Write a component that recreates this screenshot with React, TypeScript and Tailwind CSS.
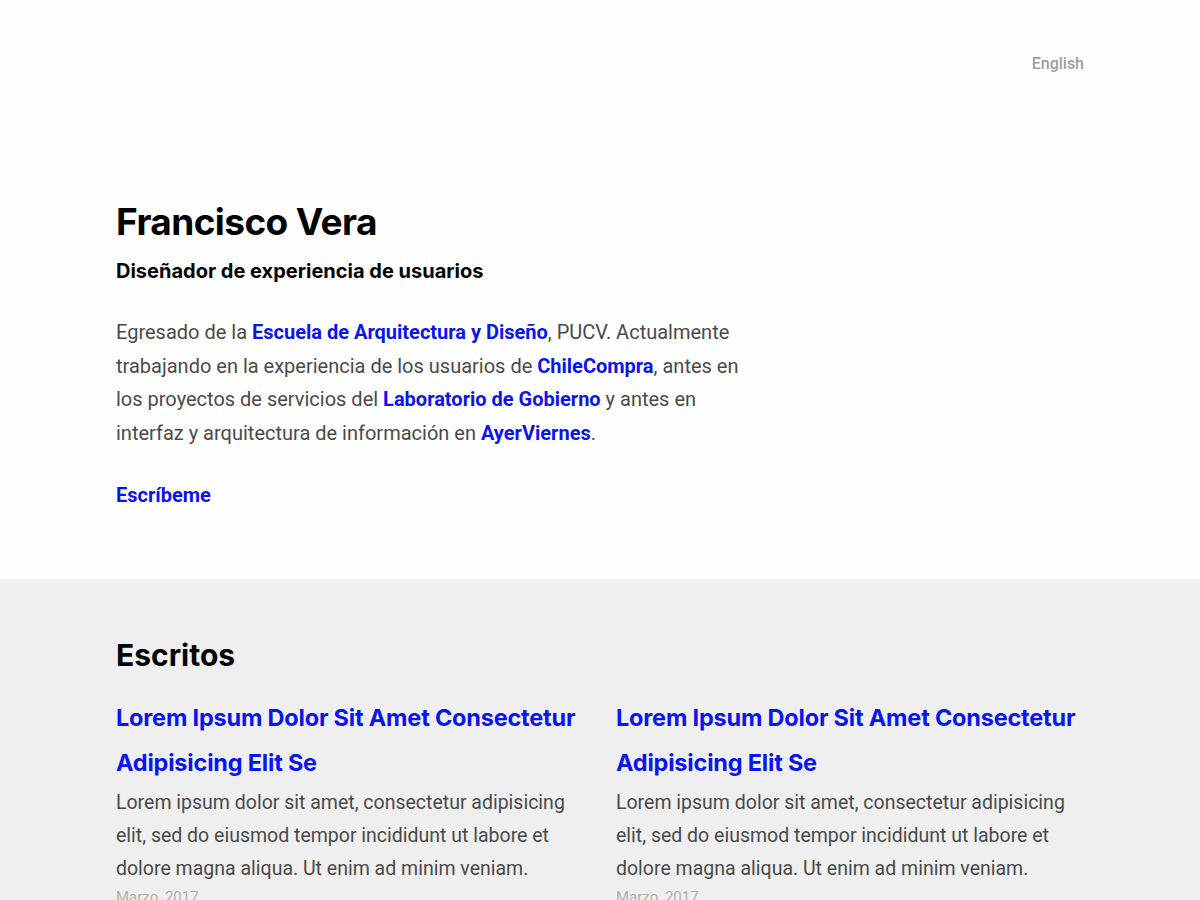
import React from "react";

function Article() {
  return (
    <div>
      <h3 className="font-[Inter,sans-serif] text-[23.5px] font-bold leading-[45px] text-[#0a14f0] tracking-[-0.2px]">
        Lorem Ipsum Dolor Sit Amet Consectetur Adipisicing Elit Se
      </h3>
      <p className="w-[468px] font-[Roboto,sans-serif] text-[19.5px] leading-[33px] text-[#4a4a4a] mt-[1px]">
        Lorem ipsum dolor sit amet, consectetur adipisicing elit, sed do eiusmod tempor incididunt ut labore et dolore magna aliqua. Ut enim ad minim veniam.
      </p>
      <p className="font-[Roboto,sans-serif] text-[15px] leading-[20px] text-[#b0b0b0] mt-[2px]">
        Marzo, 2017
      </p>
    </div>
  );
}

export default function App() {
  return (
    <div className="min-h-[900px] bg-[#fefefe] font-[Roboto,sans-serif]">
      <header className="w-[968px] mx-auto flex justify-end pt-[52px]">
        <a className="text-[16px] font-medium text-[#9e9e9e]">English</a>
      </header>
      <section className="w-[968px] mx-auto pt-[123px] pb-[71px]">
        <h1 className="font-[Inter,sans-serif] text-[37px] font-bold text-black leading-[46px] tracking-[-0.6px]">Francisco Vera</h1>
        <h2 className="font-[Inter,sans-serif] text-[20px] font-bold text-black mt-[13px] leading-[26px]">Diseñador de experiencia de usuarios</h2>
        <p className="w-[630px] text-[20px] leading-[33.6px] text-[#4a4a4a] mt-[32px]">
          Egresado de la <a className="font-bold text-[#0a14f0]">Escuela de Arquitectura y Diseño</a>, PUCV. Actualmente trabajando en la experiencia de los usuarios de <a className="font-bold text-[#0a14f0]">ChileCompra</a>, antes en los proyectos de servicios del <a className="font-bold text-[#0a14f0]">Laboratorio de Gobierno</a> y antes en interfaz y arquitectura de información en <a className="font-bold text-[#0a14f0]">AyerViernes</a>.
        </p>
        <a className="block mt-[32px] text-[20px] font-bold text-[#0a14f0] leading-[26px]">Escríbeme</a>
      </section>
      <section className="bg-[#efefef] min-h-[321px]">
        <div className="w-[968px] mx-auto pt-[56px]">
          <h2 className="font-[Inter,sans-serif] text-[30px] font-bold text-black leading-[40px]">Escritos</h2>
          <div className="grid grid-cols-[484px_484px] gap-x-[16px] mt-[20px]">
            <Article />
            <Article />
          </div>
        </div>
      </section>
    </div>
  );
}
